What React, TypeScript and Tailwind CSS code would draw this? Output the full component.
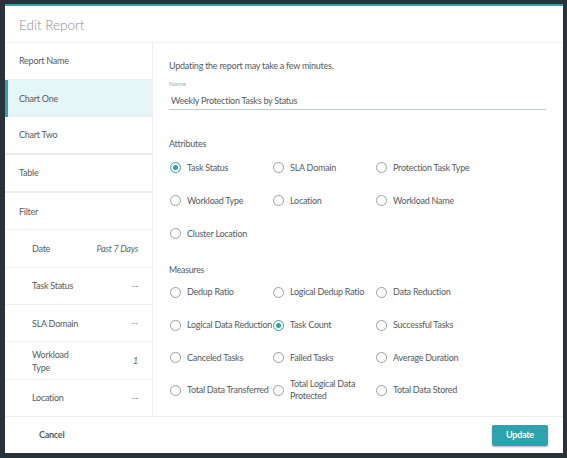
import React from 'react';

const font = { fontFamily: 'Lato, "Open Sans", sans-serif', letterSpacing: '-0.25px' };

type Item = { label: React.ReactNode; key: string; checked?: boolean };

const attributes: Item[] = [
  { key: 'ts', label: 'Task Status', checked: true },
  { key: 'sla', label: 'SLA Domain' },
  { key: 'ptt', label: 'Protection Task Type' },
  { key: 'wt', label: 'Workload Type' },
  { key: 'loc', label: 'Location' },
  { key: 'wn', label: 'Workload Name' },
  { key: 'cl', label: 'Cluster Location' },
];

const measures: Item[] = [
  { key: 'dr', label: 'Dedup Ratio' },
  { key: 'ldr', label: 'Logical Dedup Ratio' },
  { key: 'dred', label: 'Data Reduction' },
  { key: 'ldred', label: 'Logical Data Reduction' },
  { key: 'tc', label: 'Task Count', checked: true },
  { key: 'st', label: 'Successful Tasks' },
  { key: 'ct', label: 'Canceled Tasks' },
  { key: 'ft', label: 'Failed Tasks' },
  { key: 'ad', label: 'Average Duration' },
  { key: 'tdt', label: 'Total Data Transferred' },
  {
    key: 'tldp',
    label: (
      <>
        Total Logical Data
        <br />
        Protected
      </>
    ),
  },
  { key: 'tds', label: 'Total Data Stored' },
];

const filters = [
  { label: 'Date', value: 'Past 7 Days', italic: true },
  { label: 'Task Status', value: '--' },
  { label: 'SLA Domain', value: '--' },
  { label: 'Workload Type', value: '1', italic: true },
  { label: 'Location', value: '--' },
];

function Radio({ item, rowH }: { item: Item; rowH: string }) {
  return (
    <div className={'flex items-center gap-[6px] ' + rowH}>
      <span
        className={
          'shrink-0 w-[11px] h-[11px] rounded-full border flex items-center justify-center ' +
          (item.checked ? 'border-[#2fa3ad]' : 'border-[#9a9ea3]')
        }
      >
        {item.checked && <span className="w-[5px] h-[5px] rounded-full bg-[#2fa3ad]" />}
      </span>
      <span className="text-[9px] leading-[12px] text-[#555b61] whitespace-nowrap">{item.label}</span>
    </div>
  );
}

export default function App() {
  return (
    <div className="h-[458px] bg-[#29323b] pt-[4px] pb-[5px] pl-[5px] pr-[4px]" style={font}>
      <div className="h-full flex flex-col bg-white border-t-[2px] border-[#2fa3ad] overflow-hidden">
        <div className="h-[37px] shrink-0 flex items-center pl-[14px] pt-[3px] border-b border-[#f0f0f0]">
          <h1 className="text-[13.5px] font-light text-[#8a8e93] tracking-normal">Edit Report</h1>
        </div>

        <div className="flex flex-1 min-h-0">
          <div className="w-[148px] shrink-0 flex flex-col border-r border-[#eeeeee] text-[9px] text-[#555b61]">
            <div className="flex-1 flex items-center pl-[14px] border-b border-[#f0f0f0]">Report Name</div>
            <div className="flex-1 flex items-center pl-[11px] bg-[#e6f5f6] border-l-[3px] border-[#2fa3ad]">
              Chart One
            </div>
            <div className="flex-1 flex items-center pl-[14px] border-b-[2px] border-[#ebebeb]">Chart Two</div>
            <div className="flex-1 flex items-center pl-[14px] border-b-[2px] border-[#ebebeb]">Table</div>
            <div className="flex-1 flex items-center pl-[14px] border-b border-[#f0f0f0]">Filter</div>
            {filters.map((f, i) => (
              <div
                key={f.label}
                className={
                  'flex-1 flex items-center justify-between pl-[27px] pr-[14px] ' +
                  (i < filters.length - 1 ? 'border-b border-[#f0f0f0]' : '')
                }
              >
                <span className="max-w-[48px] leading-[13px]">{f.label}</span>
                <span className={f.italic ? 'italic text-[#666]' : 'text-[#888]'}>{f.value}</span>
              </div>
            ))}
          </div>

          <div className="flex-1 pl-[16px] pr-[17px] pt-[17px]">
            <p className="text-[9px] leading-[12px] text-[#555b61]">Updating the report may take a few minutes.</p>
            <div className="mt-[8px] text-[6.5px] leading-[8px] text-[#aaa] tracking-normal">Name</div>
            <div className="mt-[7px] pl-[2px] pb-[2px] text-[9px] leading-[12px] text-[#555b61] border-b border-[#c3c8cc]">
              Weekly Protection Tasks by Status
            </div>
            <div className="mt-[28px] text-[9px] leading-[12px] text-[#555b61]">Attributes</div>
            <div className="grid grid-cols-[103px_103px_103px] pl-[1px] mt-[1px]">
              {attributes.map((a) => (
                <Radio key={a.key} item={a} rowH="h-[33px]" />
              ))}
            </div>
            <div className="mt-[14px] text-[8.75px] leading-[12px] text-[#555b61]">Measures</div>
            <div className="grid grid-cols-[103px_103px_103px] pl-[1px]">
              {measures.map((a) => (
                <Radio key={a.key} item={a} rowH="h-[32.7px]" />
              ))}
            </div>
          </div>
        </div>

        <div className="h-[37px] shrink-0 flex items-center justify-between border-t border-[#eeeeee] pl-[34px] pr-[15px]">
          <button className="text-[9px] font-bold text-[#555b61]">Cancel</button>
          <button className="w-[56px] h-[21px] bg-[#2fa3ad] text-white text-[9px] font-bold rounded-[2px] shadow-[0_1px_2px_rgba(0,0,0,0.3)]">
            Update
          </button>
        </div>
      </div>
    </div>
  );
}
